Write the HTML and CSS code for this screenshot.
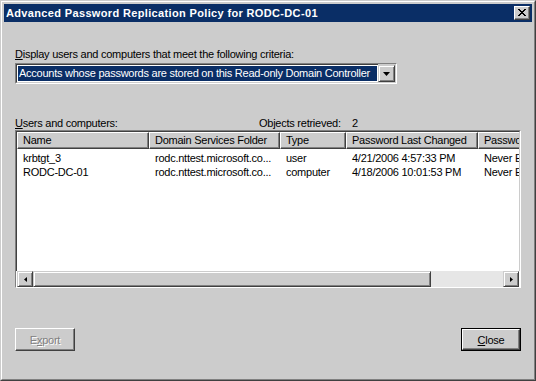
FILE: index.html
```html
<!DOCTYPE html>
<html lang="en">
<head>
    <meta charset="UTF-8">
    <title>Advanced Password Replication Policy for RODC-DC-01</title>
    <link rel="stylesheet" href="styles.css">
</head>
<body>
    <div class="window">
        <div class="frame">
            <div class="titlebar">
                <span class="title">Advanced Password Replication Policy for RODC-DC-01</span>
                <div class="close-box">
                    <svg width="8" height="7" viewBox="0 0 8 7">
                        <path d="M0 0h2v1h-2zM6 0h2v1h-2zM1 1h2v1h-2zM5 1h2v1h-2zM2 2h4v1h-4zM3 3h2v1h-2zM2 4h4v1h-4zM1 5h2v1h-2zM5 5h2v1h-2zM0 6h2v1h-2zM6 6h2v1h-2z" fill="#000"/>
                    </svg>
                </div>
            </div>

            <div class="content">
                <div class="criteria-label"><u>D</u>isplay users and computers that meet the following criteria:</div>
                <div class="combo">
                    <div class="combo-value">
                        <span class="selected">Accounts whose passwords are stored on this Read-only Domain Controller</span>
                    </div>
                    <div class="combo-arrow">
                        <svg width="7" height="4" viewBox="0 0 7 4"><path d="M0 0h7L3.5 4z" fill="#000"/></svg>
                    </div>
                </div>

                <div class="list-caption">
                    <span class="caption-left"><u>U</u>sers and computers:</span>
                    <span class="caption-mid">Objects retrieved:</span>
                    <span>2</span>
                </div>

                <div class="listview">
                    <div class="lv-area">
                        <div class="lv-row lv-header">
                            <div class="lv-col">Name</div>
                            <div class="lv-col">Domain Services Folder</div>
                            <div class="lv-col">Type</div>
                            <div class="lv-col">Password Last Changed</div>
                            <div class="lv-col">Password Expires</div>
                        </div>
                        <div class="lv-row lv-item">
                            <div class="lv-cell">krbtgt_3</div>
                            <div class="lv-cell">rodc.nttest.microsoft.co...</div>
                            <div class="lv-cell">user</div>
                            <div class="lv-cell">4/21/2006 4:57:33 PM</div>
                            <div class="lv-cell">Never Expires</div>
                        </div>
                        <div class="lv-row lv-item">
                            <div class="lv-cell">RODC-DC-01</div>
                            <div class="lv-cell">rodc.nttest.microsoft.co...</div>
                            <div class="lv-cell">computer</div>
                            <div class="lv-cell">4/18/2006 10:01:53 PM</div>
                            <div class="lv-cell">Never Expires</div>
                        </div>
                    </div>
                    <div class="hscroll">
                        <div class="sb-btn">
                            <svg width="3" height="5" viewBox="0 0 3 5"><path d="M3 0v5L0 2.5z" fill="#000"/></svg>
                        </div>
                        <div class="sb-thumb"></div>
                        <div class="sb-track"></div>
                        <div class="sb-btn">
                            <svg width="3" height="5" viewBox="0 0 3 5"><path d="M0 0v5l3-2.5z" fill="#000"/></svg>
                        </div>
                    </div>
                </div>

                <div class="buttons">
                    <div class="btn btn-disabled">E<u>x</u>port</div>
                    <div class="btn btn-default"><span class="btn-inner"><u>C</u>lose</span></div>
                </div>
            </div>
        </div>
    </div>
</body>
</html>
```

FILE: styles.css
```css
body {
    margin: 0;
    padding: 0;
    font-family: 'Liberation Sans', Arial, sans-serif;
    font-size: 11px;
    letter-spacing: -0.25px;
    color: #000;
    background-color: #cccccc;
}

/* Window frame */
.window {
    box-sizing: border-box;
    width: 536px;
    height: 381px;
    border: 1px solid;
    border-color: #cccccc #404040 #404040 #cccccc;
    background-color: #cccccc;
}

.frame {
    box-sizing: border-box;
    height: 100%;
    border: 1px solid;
    border-color: #ffffff #808080 #808080 #ffffff;
    padding: 2px;
    display: flex;
    flex-direction: column;
}

.titlebar {
    height: 18px;
    background-color: #0a2e66;
    display: flex;
    align-items: center;
    justify-content: space-between;
    padding: 0 2px 0 2px;
}

.title {
    color: #fff;
    font-weight: bold;
    font-size: 11px;
    letter-spacing: 0.35px;
}

.close-box {
    box-sizing: border-box;
    width: 16px;
    height: 14px;
    background-color: #cccccc;
    border: 1px solid;
    border-color: #ffffff #404040 #404040 #ffffff;
    box-shadow: inset -1px -1px 0 #808080;
    display: flex;
    align-items: center;
    justify-content: center;
    padding: 0 1px 1px 0;
}

/* Dialog body */
.content {
    flex: 1;
    padding: 0 11px;
    display: flex;
    flex-direction: column;
}

.criteria-label {
    margin-top: 26px;
    line-height: 13px;
}

.combo {
    box-sizing: border-box;
    margin-top: 2px;
    width: 382px;
    height: 21px;
    border: 1px solid;
    border-color: #808080 #ffffff #ffffff #808080;
    display: flex;
}

.combo-value {
    flex: 1;
    min-width: 0;
    display: flex;
    background-color: #fff;
    border: 1px solid;
    border-right: none;
    border-color: #404040 transparent #cccccc #404040;
    padding: 1px;
}

.selected {
    flex: 1;
    min-width: 0;
    background-color: #0a2e66;
    color: #fff;
    line-height: 15px;
    padding-left: 1px;
    white-space: nowrap;
    overflow: hidden;
}

.combo-arrow {
    box-sizing: border-box;
    flex-shrink: 0;
    width: 17px;
    margin: 1px 1px 1px 0;
    background-color: #cccccc;
    border: 1px solid;
    border-color: #cccccc #404040 #404040 #cccccc;
    box-shadow: inset 1px 1px 0 #ffffff, inset -1px -1px 0 #808080;
    display: flex;
    align-items: center;
    justify-content: center;
}

.list-caption {
    margin-top: 32px;
    line-height: 14px;
    display: flex;
}

.caption-left {
    width: 244px;
}

.caption-mid {
    width: 93px;
}

/* List view */
.listview {
    box-sizing: border-box;
    height: 158px;
    border: 1px solid;
    border-color: #808080 #ffffff #ffffff #808080;
    background-color: #fff;
    display: flex;
    flex-direction: column;
}

.lv-area {
    flex: 1;
    overflow: hidden;
    border: 1px solid;
    border-color: #404040 #cccccc transparent #404040;
    border-bottom: none;
}

.lv-row {
    display: grid;
    grid-template-columns: 132px 131px 66px 132px 120px;
    white-space: nowrap;
}

.lv-header {
    height: 17px;
}

.lv-col {
    box-sizing: border-box;
    background-color: #cccccc;
    border: 1px solid;
    border-color: #ffffff #404040 #404040 #ffffff;
    box-shadow: inset -1px -1px 0 #808080;
    padding-left: 5px;
    line-height: 14px;
    overflow: hidden;
}

.lv-item {
    line-height: 14px;
}

.lv-header + .lv-item {
    margin-top: 2px;
}

.lv-cell {
    padding-left: 6px;
    overflow: hidden;
}

.hscroll {
    height: 16px;
    display: flex;
    margin-left: 1px;
    width: 502px;
}

.sb-btn {
    box-sizing: border-box;
    width: 16px;
    height: 16px;
    background-color: #cccccc;
    border: 1px solid;
    border-color: #cccccc #404040 #404040 #cccccc;
    box-shadow: inset 1px 1px 0 #ffffff, inset -1px -1px 0 #808080;
    display: flex;
    align-items: center;
    justify-content: center;
}

.sb-thumb {
    box-sizing: border-box;
    width: 398px;
    background-color: #cccccc;
    border: 1px solid;
    border-color: #cccccc #404040 #404040 #cccccc;
    box-shadow: inset 1px 1px 0 #ffffff, inset -1px -1px 0 #808080;
}

.sb-track {
    flex: 1;
    background-color: #e6e6e6;
}

/* Buttons */
.buttons {
    margin-top: 40px;
    display: flex;
    justify-content: space-between;
}

.btn {
    box-sizing: border-box;
    width: 60px;
    height: 23px;
    background-color: #cccccc;
    border: 1px solid;
    border-color: #ffffff #404040 #404040 #ffffff;
    box-shadow: inset -1px -1px 0 #808080;
    display: flex;
    align-items: center;
    justify-content: center;
}

.btn-disabled {
    color: #808080;
    text-shadow: 1px 1px 0 #ffffff;
}

.btn-default {
    border: 1px solid #000;
    box-shadow: none;
    padding: 0;
}

.btn-inner {
    box-sizing: border-box;
    width: 100%;
    height: 100%;
    border: 1px solid;
    border-color: #ffffff #404040 #404040 #ffffff;
    box-shadow: inset -1px -1px 0 #808080;
    display: flex;
    align-items: center;
    justify-content: center;
}
```
